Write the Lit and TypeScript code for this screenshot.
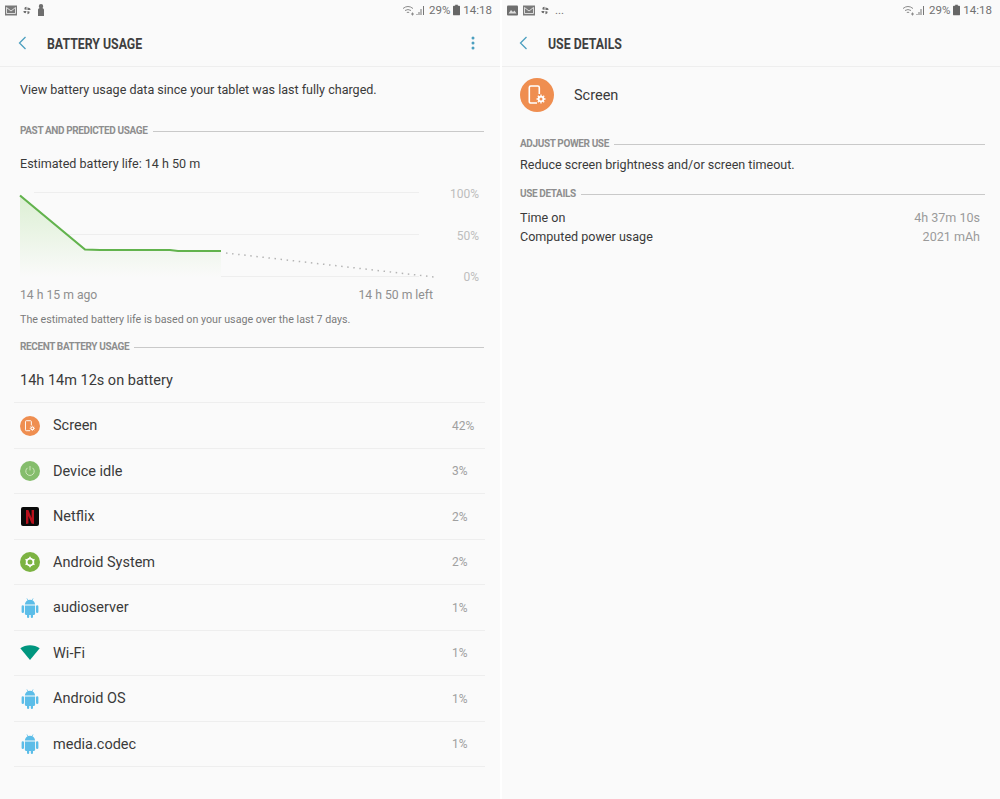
import { LitElement, html, css, svg } from 'lit'
import { customElement } from 'lit/decorators.js'

const android = svg`<svg width="20" height="20" viewBox="0 0 20 20"><path fill="#5cbde8" d="M7 .3l1.200 1.700a5 5 0 0 1 3.600 0L13 .3l.5.300-1.100 1.700c1.500.8 2.600 2.400 2.700 4.200H4.900c.1-1.800 1.200-3.400 2.700-4.200L6.500.6zM4.900 7.400h10.200v8.400a1.100 1.100 0 0 1-1.100 1.100h-1v2a1.100 1.100 0 0 1-2.200 0v-2H9.200v2a1.100 1.100 0 0 1-2.200 0v-2H6a1.100 1.100 0 0 1-1.100-1.100zM1.600 8.500a1.200 1.200 0 0 1 2.400 0v5.300a1.200 1.200 0 0 1-2.400 0zM16 8.500a1.200 1.200 0 0 1 2.400 0v5.300a1.200 1.200 0 0 1-2.400 0z"/></svg>`

// tablet outline with a small gear, drawn on the 34px disc and scaled down for the list
const screenDisc = (size: number) => html`<span class="disc orange"><svg width=${size} height=${size} viewBox="0 0 34 34">
  <path fill="none" stroke="#fff" stroke-width="1.600" d="M17 25h-6.200a1.500 1.500 0 0 1-1.500-1.500V9.500A1.500 1.500 0 0 1 10.800 8h7a1.500 1.500 0 0 1 1.500 1.500V16"/>
  <circle cx="21" cy="21" r="2.400" fill="none" stroke="#fff" stroke-width="1.800"/>
  <path stroke="#fff" stroke-width="1.300" d="M21 16.500v1.500M21 24v1.500M16.500 21H18M24 21h1.500M17.800 17.800l1 1M23.200 23.200l1 1M17.800 24.200l1-1M23.200 18.800l1-1"/>
</svg></span>`

const icons: Record<string, unknown> = {
  screen: screenDisc(20),
  idle: html`<span class="disc green"><svg width="12" height="12" viewBox="0 0 12 12"><path fill="none" stroke="#cfe6bd" stroke-width="1" d="M3.600 2.800a4.200 4.200 0 1 0 4.800 0M6 1v4.400"/></svg></span>`,
  netflix: html`<span class="netflix"><svg width="8" height="14" viewBox="0 0 8 14"><path fill="#b8101c" d="M0 0h2.400l3.200 8V0H8v14l-2.400-.4L2.400 6v7.600L0 14z"/></svg></span>`,
  system: html`<span class="disc lime"><svg width="12" height="12" viewBox="0 0 12 12"><circle cx="6" cy="6" r="3.400" fill="none" stroke="#fff" stroke-width="1.800"/><path stroke="#fff" stroke-width="1.600" d="M6 .8v2M6 9.200v2M1.500 3.400l1.700 1M8.800 7.600l1.700 1M1.500 8.600l1.700-1M8.800 4.400l1.700-1"/></svg></span>`,
  android,
  wifi: svg`<svg width="20" height="20" viewBox="0 0 20 20"><path fill="#00967f" d="M.3 5.200C3 3.300 6.400 2.300 10 2.300s7 1 9.700 2.900L10 17z"/></svg>`,
}

const rows = [
  ['screen', 'Screen', '42%'],
  ['idle', 'Device idle', '3%'],
  ['netflix', 'Netflix', '2%'],
  ['system', 'Android System', '2%'],
  ['android', 'audioserver', '1%'],
  ['wifi', 'Wi-Fi', '1%'],
  ['android', 'Android OS', '1%'],
  ['android', 'media.codec', '1%'],
]

@customElement('app-root')
export class AppRoot extends LitElement {
  static styles = css`
    :host {
      display: grid;
      grid-template-columns: 500px 500px;
      width: 1000px;
      height: 799px;
      overflow: hidden;
      background: #fff;
      font-family: Roboto, sans-serif;
      color: #3a3a3a;
    }
    .pane {
      background: #fafafa;
      height: 799px;
    }
    .pane + .pane {
      margin-left: 2px;
    }
    .status {
      display: flex;
      align-items: center;
      height: 20px;
      padding: 0 8px 0 5px;
      gap: 5px;
      color: #707070;
      font-size: 11.5px;
    }
    .status .right {
      margin-left: auto;
      display: flex;
      align-items: center;
      gap: 3px;
    }
    .toolbar {
      display: flex;
      align-items: center;
      height: 46px;
      padding: 0 20px 0 17px;
      border-bottom: 1px solid #eeeeee;
    }
    .toolbar h1 {
      margin: 0 0 0 20px;
      padding-top: 1px;
      font-size: 14px;
      font-weight: 700;
      color: #3f3f3f;
      transform: scaleX(0.88);
      transform-origin: left;
    }
    .pane + .pane .toolbar {
      padding-left: 16px;
    }
    .toolbar .more {
      margin-left: auto;
      margin-right: 5px;
      display: flex;
    }
    .back {
      display: flex;
    }
    .body {
      padding: 0 16px 0 20px;
    }
    .lead {
      font-size: 12.55px;
      line-height: 16px;
      margin-top: 15px;
    }
    .section {
      display: flex;
      align-items: center;
      gap: 5px;
      font-size: 10px;
      font-weight: 700;
      letter-spacing: -0.38px;
      color: #8e8e8e;
      line-height: 12px;
    }
    .section::after {
      content: '';
      flex: 1;
      height: 1px;
      background: #c9c9c9;
    }
    .past { margin-top: 27px; }
    .estimate {
      font-size: 12.55px;
      line-height: 16px;
      margin-top: 19px;
    }
    .chart {
      display: block;
      margin: 7px 0 0 -20px;
    }
    .axis {
      display: flex;
      justify-content: space-between;
      padding-right: 51px;
      font-size: 12.2px;
      line-height: 16px;
      color: #8f8f8f;
    }
    .note {
      font-size: 10.7px;
      line-height: 14px;
      color: #7a7a7a;
      margin-top: 10px;
    }
    .recent { margin-top: 14px; }
    .total {
      font-size: 14.5px;
      line-height: 18px;
      margin-top: 19px;
      padding-bottom: 12px;
    }
    .list {
      margin: 0 -1px 0 -6px;
      border-top: 1px solid #eeeeee;
    }
    .row {
      display: flex;
      align-items: center;
      height: 43.5px;
      padding: 1px 0 0 6px;
      border-bottom: 1px solid #eeeeee;
      font-size: 14.5px;
    }
    .icon {
      width: 20px;
      height: 20px;
      display: flex;
      align-items: center;
      justify-content: center;
      margin-right: 13px;
    }
    .disc {
      width: 20px;
      height: 20px;
      border-radius: 50%;
      display: flex;
      align-items: center;
      justify-content: center;
    }
    .orange { background: #ef8e50; }
    .green { background: #85bd6c; }
    .lime { background: #7cb342; }
    .netflix {
      width: 18px;
      height: 19px;
      background: #0a0a0a;
      border-radius: 2px;
      display: flex;
      align-items: center;
      justify-content: center;
    }
    .pct {
      margin-left: auto;
      width: 33px;
      font-size: 12px;
      color: #a0a0a0;
    }
    .app {
      display: flex;
      align-items: center;
      gap: 20px;
      margin-top: 11px;
      font-size: 14.5px;
    }
    .app .disc {
      width: 34px;
      height: 34px;
    }
    .detail-body {
      padding: 0 15px 0 18px;
    }
    .adjust { margin-top: 26px; }
    .text13 {
      font-size: 12.55px;
      line-height: 19px;
    }
    .reduce { margin-top: 5px; }
    .uses { margin-top: 14px; }
    .kv {
      display: flex;
      justify-content: space-between;
      padding-right: 5px;
    }
    .kv span:last-child {
      color: #9a9a9a;
    }
    .kv-list { margin-top: 8px; }
  `

  private _status(left: unknown) {
    return html`<div class="status">
      ${left}
      <div class="right">
        <svg width="24" height="11" viewBox="0 0 24 11"><path fill="none" stroke="#8a8a8a" d="M1 3.500a8 8 0 0 1 10 0M3 5.500a5.500 5.500 0 0 1 6 0M4.800 7.500a3 3 0 0 1 2.400 0"/><path stroke="#8a8a8a" d="M9 9h3M10.500 7.500v3"/><path stroke="#777" d="M15 10V9M17 10V7M19 10V4M21.500 10V1"/></svg>
        <span>29%</span>
        <svg width="7" height="12" viewBox="0 0 8 12"><path fill="#666" d="M2.500 0h3v1H7a1 1 0 0 1 1 1v9a1 1 0 0 1-1 1H1a1 1 0 0 1-1-1V2a1 1 0 0 1 1-1h1.500z"/></svg>
        <span>14:18</span>
      </div>
    </div>`
  }

  private _back() {
    return html`<span class="back"><svg width="10" height="14" viewBox="0 0 10 14"><path fill="none" stroke="#4c9fbf" stroke-width="1.300" d="M8.500 1 2.500 7l6 6"/></svg></span>`
  }

  private _pic() {
    return svg`<svg width="11" height="11" viewBox="0 0 11 11"><rect width="11" height="10" y=".5" rx="1" fill="#6e6e6e"/><path fill="#ddd" d="M1.500 8.500 4 5l2 2 1.500-1.500 2 3z"/></svg>`
  }

  private _mail() {
    return svg`<svg width="12" height="11" viewBox="0 0 12 11"><rect y=".5" width="12" height="10" fill="#7a7a7a"/><path fill="none" stroke="#e8e8e8" stroke-width=".9" d="M1.500 2.500 6 6l4.500-3.500M1.500 2.500v6h9v-6"/></svg>`
  }

  private _pin() {
    return svg`<svg width="10" height="11" viewBox="0 0 11 11"><path fill="#6e6e6e" d="M5 5V1.500a2.500 2.500 0 0 0-2.500 2.500zM6 5h3.500A2.500 2.500 0 0 0 7 2.500L6 2zM6 6v3.500A2.500 2.500 0 0 0 8.500 7zM5 6H1.500A2.500 2.500 0 0 0 4 8.500z"/></svg>`
  }

  private _person() {
    return svg`<svg width="8" height="12" viewBox="0 0 8 12"><path fill="#6e6e6e" d="M4 0a2.200 2.200 0 0 1 2.200 2.200c0 .8-.4 1.300-.7 1.800.9.500 1.500 1 1.500 2v6H1V6c0-1 .6-1.500 1.500-2-.3-.5-.7-1-.7-1.800A2.200 2.200 0 0 1 4 0z"/></svg>`
  }

  private _chart() {
    return svg`<svg class="chart" width="485" height="108" viewBox="0 179 485 108">
      <defs><linearGradient id="fill" x1="0" y1="0" x2="0" y2="1"><stop offset="0" stop-color="#dcefd3"/><stop offset="1" stop-color="#fafafa"/></linearGradient></defs>
      <path stroke="#eeeeee" d="M34 192.500h385M34 234.500h385M34 276.500h385"/>
      <path fill="url(#fill)" d="M20 195 85 249.500 140 250 221 251V277H20z"/>
      <path fill="none" stroke="#62b34d" stroke-width="2.200" d="M20 195.500 85 249.500 100 250 170 250 178 251 221 251"/>
      <path fill="none" stroke="#b5b5b5" stroke-width="1.500" stroke-dasharray="1.500 4.600" d="M226 253 434 277"/>
      <g font-size="12" fill="#bdbdbd" text-anchor="end" font-family="Roboto, sans-serif">
        <text x="479" y="198">100%</text><text x="479" y="239.500">50%</text><text x="479" y="281">0%</text>
      </g>
    </svg>`
  }

  render() {
    return html`
      <div class="pane">
        ${this._status(html`${this._mail()}${this._pin()}${this._person()}`)}
        <div class="toolbar">
          ${this._back()}
          <h1>BATTERY USAGE</h1>
          <span class="more"><svg width="4" height="14" viewBox="0 0 4 14"><g fill="#4c9fbf"><circle cx="2" cy="2" r="1.500"/><circle cx="2" cy="7" r="1.500"/><circle cx="2" cy="12" r="1.500"/></g></svg></span>
        </div>
        <div class="body">
          <div class="lead">View battery usage data since your tablet was last fully charged.</div>
          <div class="section past">PAST AND PREDICTED USAGE</div>
          <div class="estimate">Estimated battery life: 14 h 50 m</div>
          ${this._chart()}
          <div class="axis"><span>14 h 15 m ago</span><span>14 h 50 m left</span></div>
          <div class="note">The estimated battery life is based on your usage over the last 7 days.</div>
          <div class="section recent">RECENT BATTERY USAGE</div>
          <div class="total">14h 14m 12s on battery</div>
          <div class="list">
            ${rows.map(([icon, name, pct]) => html`<div class="row">
              <span class="icon">${icons[icon]}</span>
              <span>${name}</span>
              <span class="pct">${pct}</span>
            </div>`)}
          </div>
        </div>
      </div>
      <div class="pane">
        ${this._status(html`${this._pic()}${this._mail()}${this._pin()}<span>...</span>`)}
        <div class="toolbar">
          ${this._back()}
          <h1>USE DETAILS</h1>
        </div>
        <div class="detail-body">
          <div class="app">${screenDisc(34)}<span>Screen</span></div>
          <div class="section adjust">ADJUST POWER USE</div>
          <div class="text13 reduce">Reduce screen brightness and/or screen timeout.</div>
          <div class="section uses">USE DETAILS</div>
          <div class="kv-list text13">
            <div class="kv"><span>Time on</span><span>4h 37m 10s</span></div>
            <div class="kv"><span>Computed power usage</span><span>2021 mAh</span></div>
          </div>
        </div>
      </div>
    `
  }
}
